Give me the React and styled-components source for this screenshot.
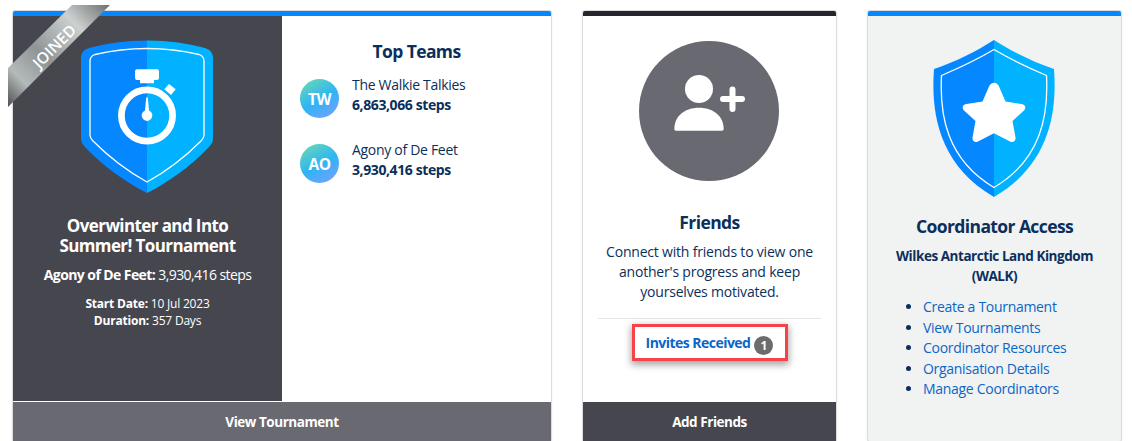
import React from 'react'
import styled, { createGlobalStyle } from 'styled-components'

const Global = createGlobalStyle`
  html, body { margin: 0; padding: 0; background: #fff; }
  body { font-family: "Open Sans", "Noto Sans", sans-serif; color: #0b2f5b; }
  * { box-sizing: border-box; }
`

const Page = styled.div`
  display: grid;
  grid-template-columns: 538px 253px 253px;
  column-gap: 32px;
  padding: 11px 0 0 13px;
  height: 441px;
  overflow: hidden;
`

const Card = styled.section`
  position: relative;
  display: flex;
  flex-direction: column;
  height: 430px;
  background: ${p => p.$bg || '#fff'};
  border-top: 5px solid ${p => p.$accent};
  border-radius: 2px;
  box-shadow: 0 0 0 1px #dcdcdc, 0 1px 3px rgba(0, 0, 0, 0.16);
`

const Split = styled.div`
  flex: 1;
  display: grid;
  grid-template-columns: 269px 1fr;
  min-height: 0;
`

const DarkPanel = styled.div`
  background: #46464f;
  color: #fff;
  display: flex;
  flex-direction: column;
  align-items: center;
  text-align: center;
  padding-top: 24px;
`

const TournamentTitle = styled.h2`
  margin: 22px 0 0;
  font-size: 17px;
  line-height: 20px;
  font-weight: 700;
  letter-spacing: -0.6px;
`

const Score = styled.p`
  margin: 9px 0 0;
  font-size: 14px;
  line-height: 20px;
  letter-spacing: -0.58px;
  b { font-weight: 700; }
`

const Meta = styled.p`
  margin: 10px 0 0;
  font-size: 12px;
  line-height: 17px;
  letter-spacing: -0.2px;
  b { font-weight: 700; }
`

const TeamsPanel = styled.div`
  padding: 24px 18px 0;
`

const PanelTitle = styled.h3`
  margin: 0 0 13px;
  text-align: center;
  font-size: 17.5px;
  line-height: 22px;
  font-weight: 700;
  letter-spacing: -0.6px;
`

const Team = styled.div`
  display: flex;
  align-items: center;
  gap: 13px;
  height: 40px;
  margin-bottom: 25px;
`

const Avatar = styled.div`
  flex: none;
  width: 39px;
  height: 39px;
  margin-top: 7px;
  border-radius: 50%;
  display: flex;
  align-items: center;
  justify-content: center;
  color: #fff;
  font-size: 15.5px;
  font-weight: 700;
  letter-spacing: -0.4px;
  background: linear-gradient(150deg, #6fdcae 0%, #2fb4f5 52%, #7f9dff 100%);
`

const TeamName = styled.div`
  font-size: 14px;
  line-height: 20px;
  letter-spacing: -0.3px;
`

const TeamSteps = styled.div`
  font-size: 14px;
  line-height: 20px;
  font-weight: 700;
  letter-spacing: -0.4px;
`

const FooterButton = styled.div`
  flex: none;
  height: 39px;
  margin-top: 1px;
  display: flex;
  align-items: center;
  justify-content: center;
  background: ${p => p.$bg};
  color: #fff;
  font-size: 13.5px;
  font-weight: 700;
  letter-spacing: -0.45px;
`

const Ribbon = styled.div`
  position: absolute;
  top: -11px;
  left: -5px;
  width: 102px;
  height: 102px;
  clip-path: polygon(64px 0, 102px 0, 0 102px, 0 63px);
  background: linear-gradient(45deg, #4d4f50 0%, #b4b9b9 20%, #8f9495 42%, #ccd0cf 74%, #6d6f70 100%);
`

const RibbonText = styled.span`
  position: absolute;
  left: 12px;
  top: 32px;
  width: 68px;
  text-align: center;
  color: #fff;
  font-size: 15.5px;
  line-height: 18px;
  font-weight: 600;
  transform: rotate(-45deg);
`

const CenterBody = styled.div`
  flex: 1;
  display: flex;
  flex-direction: column;
  align-items: center;
  text-align: center;
  padding: ${p => p.$pt || 25}px 15px 0;
  min-height: 0;
`

const Art = styled.div`
  margin-right: 1px;
  flex: none;
`

const CircleIcon = styled.div`
  width: 140px;
  height: 140px;
  margin-right: 1px;
  flex: none;
  border-radius: 50%;
  background: #696972;
  display: flex;
  align-items: center;
  justify-content: center;
`

const CardTitle = styled.h2`
  margin: ${p => p.$mt || 20}px 0 0;
  font-size: 17.5px;
  line-height: 24px;
  font-weight: 700;
  letter-spacing: -0.6px;
`

const Blurb = styled.p`
  margin: 8px 0 0;
  font-size: 14px;
  line-height: 20px;
  letter-spacing: -0.2px;
  color: #0b2f5b;
`

const Divider = styled.hr`
  width: 100%;
  margin: 16px 0 0;
  border: 0;
  border-top: 1px solid #e6e6e6;
`

const InviteBox = styled.div`
  margin-top: 5px;
  width: 156px;
  height: 37px;
  border: 3px solid #f4444a;
  box-shadow: 0 3px 7px 1px rgba(0, 0, 0, 0.35);
  display: flex;
  align-items: center;
  justify-content: center;
  gap: 4px;
`

const InviteLink = styled.a`
  color: #0a66c9;
  font-size: 14px;
  font-weight: 700;
  letter-spacing: -0.53px;
`

const Badge = styled.span`
  width: 19px;
  height: 19px;
  border-radius: 50%;
  margin-top: 6px;
  background: #6c6c6c;
  color: #fff;
  font-size: 12px;
  font-weight: 700;
  display: flex;
  align-items: center;
  justify-content: center;
`

const OrgName = styled.h3`
  margin: 8px 0 0;
  font-size: 13.5px;
  line-height: 20px;
  font-weight: 700;
  letter-spacing: -0.45px;
`

const LinkList = styled.ul`
  align-self: flex-start;
  margin: 11px 0 0;
  padding: 0 0 0 40px;
  text-align: left;
  color: #0b2f5b;
`

const LinkItem = styled.li`
  font-size: 14px;
  line-height: 20.5px;
  letter-spacing: -0.3px;
  a { color: #0a66c9; }
`

function Stopwatch() {
  return (
    <svg width="132" height="154" viewBox="0 0 132 154" style={{ display: 'block' }}>
      <path d="M66 0.5C45 0.5 24 3.5 8 8C3 9.5 0 13 0 18V98C0 102 1.5 104 4 107C22 126 44 142 66 153Z" fill="#0587ff" />
      <path d="M66 0.5C87 0.5 108 3.5 124 8C129 9.5 132 13 132 18V98C132 102 130.5 104 128 107C110 126 88 142 66 153Z" fill="#00b2ff" />
      <path d="M66 8.5C47 8.5 29 11 14 14.5C11 15.5 9 17.5 9 21V95C9 97.5 10 99 12 101C28 117 46 131 66 142C86 131 104 117 120 101C122 99 123 97.500 123 95V21C123 17.500 121 15.500 118 14.500C103 11 85 8.500 66 8.500Z" fill="none" stroke="#fff" strokeWidth="1.3" />
      <circle cx="66" cy="75.500" r="25.600" fill="none" stroke="#fff" strokeWidth="6.700" />
      <path d="M56 29.300H76Q78 29.300 78 31.300V38Q78 40 76 40H73V43.300H59V40H56Q54 40 54 38V31.300Q54 29.300 56 29.300Z" fill="#fff" />
      <path d="M88 44L94.700 49.300L90 55L83.300 49.300Z" fill="#fff" />
      <path d="M65.200 57.500H66.800L68 70.500A5.400 5.400 0 1 1 64 70.500Z" fill="#fff" />
    </svg>
  )
}

function PersonPlus() {
  return (
    <svg width="140" height="140" viewBox="0 0 140 140" style={{ display: 'block' }}>
      <circle cx="60" cy="48" r="14" fill="#fff" />
      <path d="M35.300 88C35.300 75 46 66.700 60 66.700C74 66.700 84.700 75 84.700 88Q84.700 89.700 83 89.700H37Q35.300 89.700 35.300 88Z" fill="#fff" />
      <path d="M84 58H103M93.500 48.500V68" stroke="#fff" strokeWidth="6" strokeLinecap="round" />
    </svg>
  )
}

function StarShield() {
  return (
    <svg width="122" height="158" viewBox="0 0 122 158" style={{ display: 'block' }}>
      <path d="M61 0C44 11 22 22 1 29C-2 70 4 124 61 157Z" fill="#0587ff" />
      <path d="M61 0C78 11 100 22 121 29C124 70 118 124 61 157Z" fill="#00b2ff" />
      <path d="M61 9.500C45 19 26 28 8.500 35.500C6.500 74 13 119 61 147.500C109 119 115.500 74 113.500 35.500C96 28 77 19 61 9.500Z" fill="none" stroke="#fff" strokeWidth="1.300" />
      <path d="M61 42.700C63.500 42.700 65 44.500 66 46.500L72.500 61.500L88.500 64C92.500 64.600 93.500 68 91 70.500L79.500 81L82.500 97.500C83 101 80 103 77 101.500L61 93.300L45 101.500C42 103 39 101 39.500 97.500L42.500 81L31 70.500C28.500 68 29.500 64.600 33.500 64L49.500 61.500L56 46.500C57 44.500 58.500 42.700 61 42.700Z" fill="#fff" />
    </svg>
  )
}

const teams = [
  { initials: 'TW', name: 'The Walkie Talkies', steps: '6,863,066 steps' },
  { initials: 'AO', name: 'Agony of De Feet', steps: '3,930,416 steps' },
]

const links = ['Create a Tournament', 'View Tournaments', 'Coordinator Resources', 'Organisation Details', 'Manage Coordinators']

export default function App() {
  return (
    <Page>
      <Global />
      <Card $accent="#0587ff">
        <Split>
          <DarkPanel>
            <Art><Stopwatch /></Art>
            <TournamentTitle>Overwinter and Into<br />Summer! Tournament</TournamentTitle>
            <Score><b>Agony of De Feet:</b> 3,930,416 steps</Score>
            <Meta><b>Start Date:</b> 10 Jul 2023<br /><b>Duration:</b> 357 Days</Meta>
          </DarkPanel>
          <TeamsPanel>
            <PanelTitle>Top Teams</PanelTitle>
            {teams.map(team => (
              <Team key={team.initials}>
                <Avatar>{team.initials}</Avatar>
                <div>
                  <TeamName>{team.name}</TeamName>
                  <TeamSteps>{team.steps}</TeamSteps>
                </div>
              </Team>
            ))}
          </TeamsPanel>
        </Split>
        <FooterButton $bg="#696972">View Tournament</FooterButton>
        <Ribbon><RibbonText>JOINED</RibbonText></Ribbon>
      </Card>

      <Card $accent="#26262e">
        <CenterBody>
          <CircleIcon><PersonPlus /></CircleIcon>
          <CardTitle $mt={29}>Friends</CardTitle>
          <Blurb>Connect with friends to view one another's progress and keep yourselves motivated.</Blurb>
          <Divider />
          <InviteBox>
            <InviteLink>Invites Received</InviteLink>
            <Badge>1</Badge>
          </InviteBox>
        </CenterBody>
        <FooterButton $bg="#46464f">Add Friends</FooterButton>
      </Card>

      <Card $accent="#0587ff" $bg="#f1f2f2">
        <CenterBody $pt={24}>
          <Art><StarShield /></Art>
          <CardTitle $mt={16}>Coordinator Access</CardTitle>
          <OrgName>Wilkes Antarctic Land Kingdom<br />(WALK)</OrgName>
          <LinkList>
            {links.map(link => <LinkItem key={link}><a>{link}</a></LinkItem>)}
          </LinkList>
        </CenterBody>
      </Card>
    </Page>
  )
}
